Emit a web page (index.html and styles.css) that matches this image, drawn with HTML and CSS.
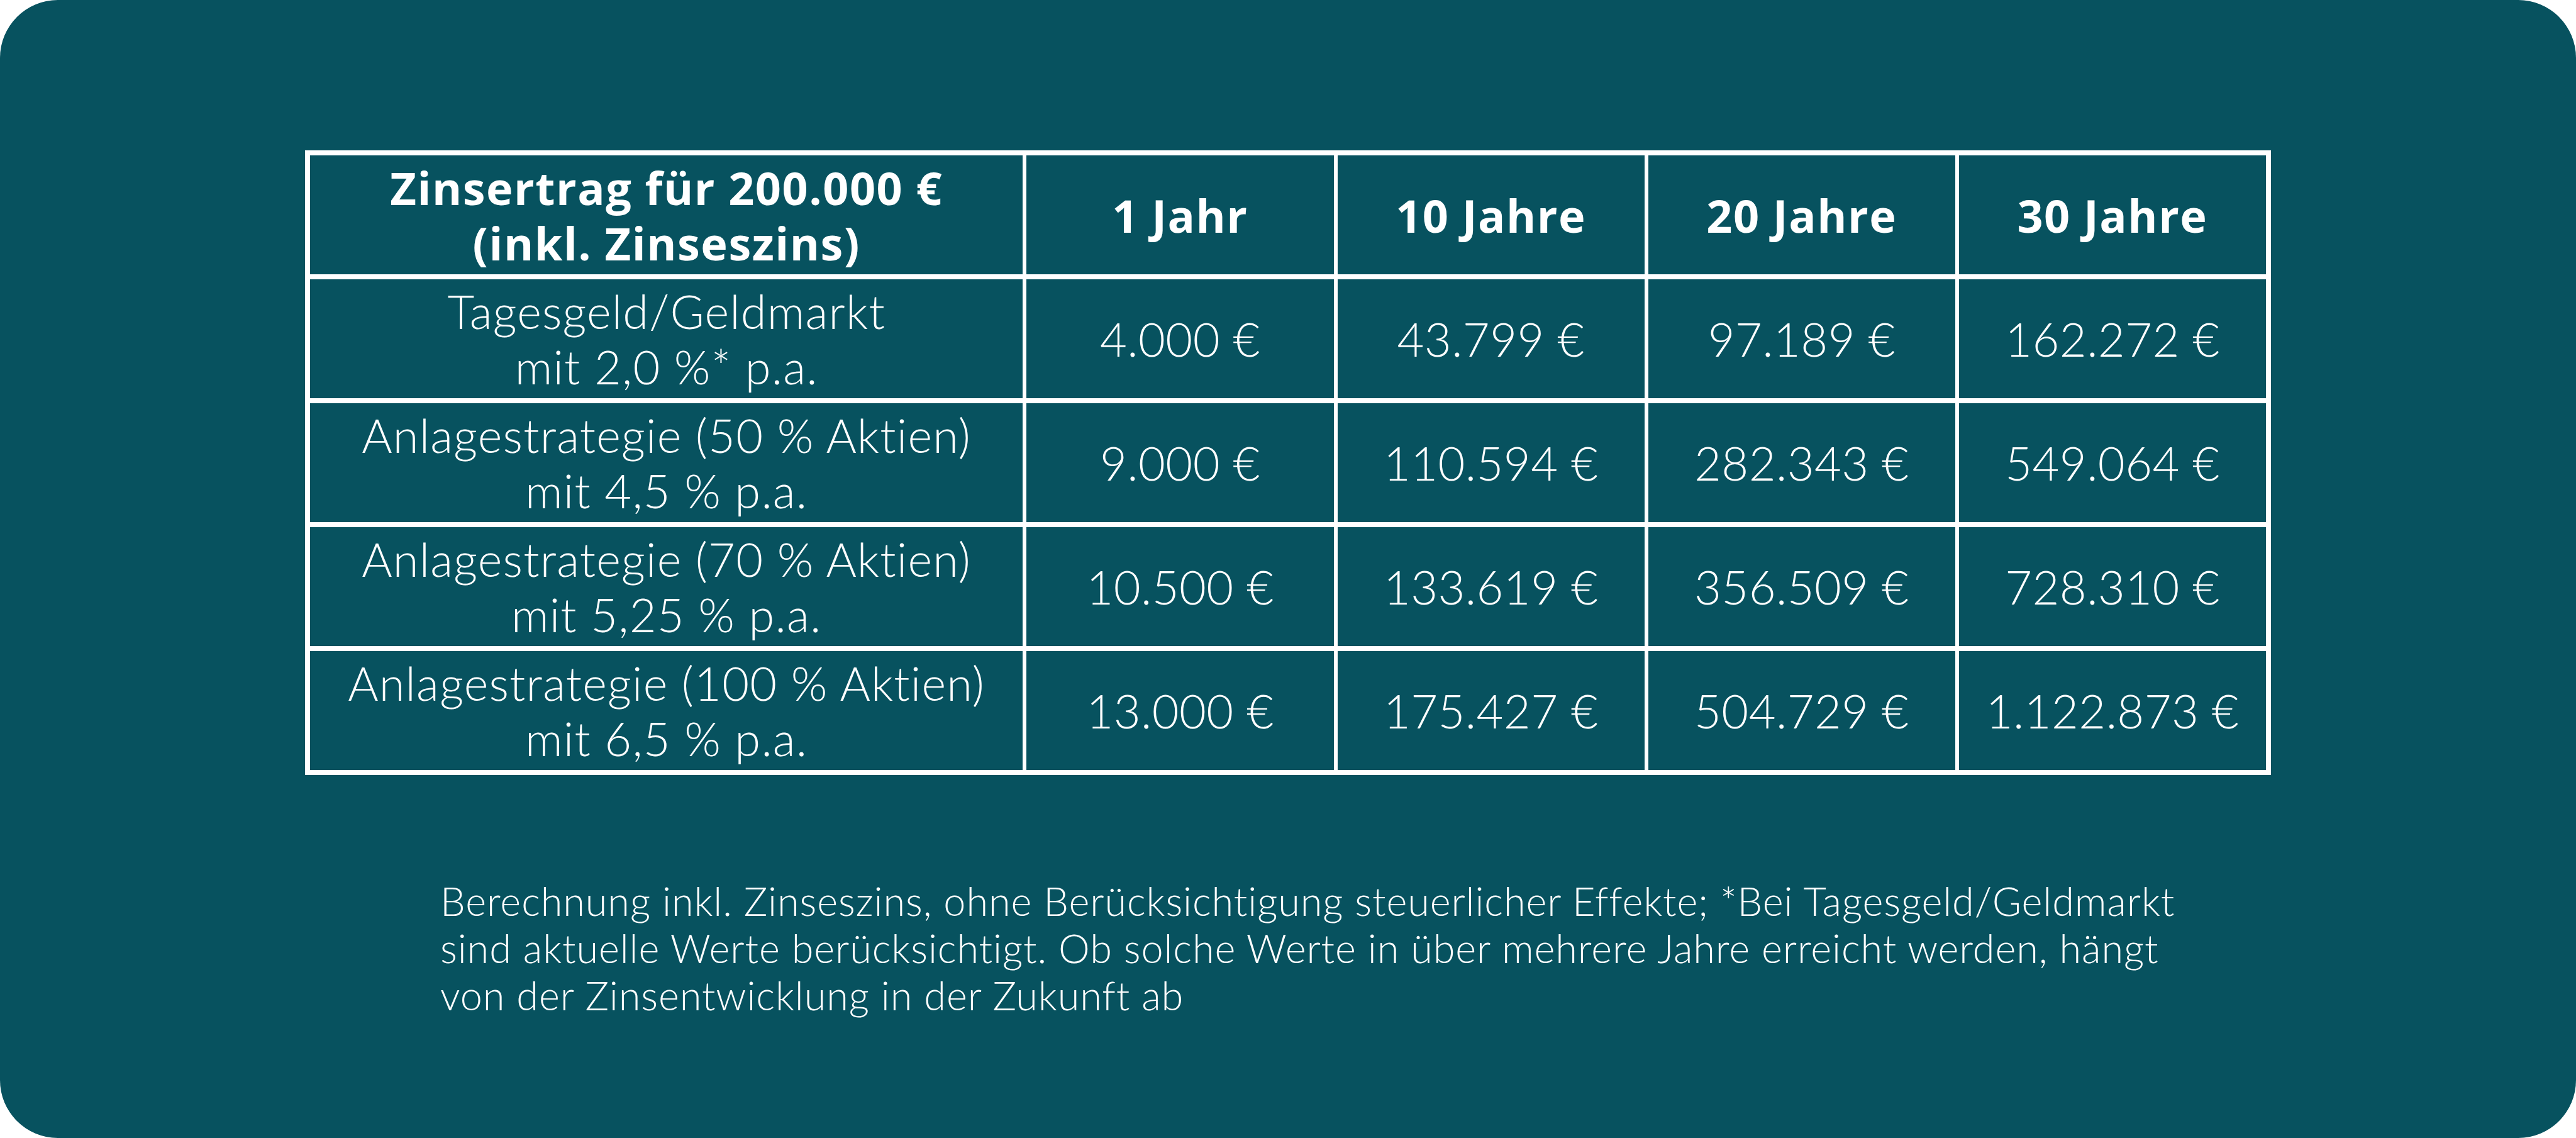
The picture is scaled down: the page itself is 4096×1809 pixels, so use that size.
FILE: index.html
```html
<!DOCTYPE html>
<html lang="de">
<head>
<meta charset="utf-8">
<title>Zinsertrag</title>
<link rel="stylesheet" href="styles.css">
</head>
<body>
<div class="card">
  <table class="rates">
    <colgroup>
      <col class="c-label">
      <col class="c-val"><col class="c-val"><col class="c-val"><col class="c-val">
    </colgroup>
    <thead>
      <tr>
        <th><span class="hl">Zinsertrag für 200.000 €</span><span class="hl">(inkl. Zinseszins)</span></th>
        <th>1 Jahr</th>
        <th>10 Jahre</th>
        <th>20 Jahre</th>
        <th>30 Jahre</th>
      </tr>
    </thead>
    <tbody>
      <tr>
        <td class="label">Tagesgeld/Geldmarkt<br>mit 2,0 %* p.a.</td>
        <td>4.000 €</td><td>43.799 €</td><td>97.189 €</td><td>162.272 €</td>
      </tr>
      <tr>
        <td class="label">Anlagestrategie (50 % Aktien)<br>mit 4,5 % p.a.</td>
        <td>9.000 €</td><td>110.594 €</td><td>282.343 €</td><td>549.064 €</td>
      </tr>
      <tr>
        <td class="label">Anlagestrategie (70 % Aktien)<br>mit 5,25 % p.a.</td>
        <td>10.500 €</td><td>133.619 €</td><td>356.509 €</td><td>728.310 €</td>
      </tr>
      <tr>
        <td class="label">Anlagestrategie (100 % Aktien)<br>mit 6,5 % p.a.</td>
        <td>13.000 €</td><td>175.427 €</td><td>504.729 €</td><td>1.122.873 €</td>
      </tr>
    </tbody>
  </table>
  <p class="note">Berechnung inkl. Zinseszins, ohne Berücksichtigung steuerlicher Effekte; *Bei Tagesgeld/Geldmarkt<br>sind aktuelle Werte berücksichtigt. Ob solche Werte in über mehrere Jahre erreicht werden, hängt<br>von der Zinsentwicklung in der Zukunft ab</p>
</div>
</body>
</html>
```
FILE: styles.css
```css
html, body {
  margin: 0;
  padding: 0;
  background: #ffffff;
}

.card {
  width: 4096px;
  height: 1809px;
  box-sizing: border-box;
  background: #07525f;
  border-radius: 92px;
  padding-top: 239px;
  display: flex;
  flex-direction: column;
  align-items: center;
  font-family: Lato, "Open Sans", "Liberation Sans", sans-serif;
  color: #ffffff;
}

.rates {
  table-layout: fixed;
  width: 3126px;
  border-collapse: separate;
  border-spacing: 6px 8px;
  padding: 0 2px;
  background: #ffffff;
}

.c-label { width: 1133px; }
.c-val { width: 488px; }

.rates th,
.rates td {
  background: #07525f;
  height: 189px;
  padding: 0;
  text-align: center;
  vertical-align: middle;
  line-height: 88px;
}

.rates th {
  font-family: "Open Sans", Lato, "Liberation Sans", sans-serif;
  font-size: 72px;
  font-weight: 700;
  letter-spacing: 1.5px;
}

.hl {
  display: block;
}

.rates td {
  font-size: 74px;
  font-weight: 300;
  letter-spacing: 0.4px;
}

.rates td.label {
  letter-spacing: 1.2px;
}

.note {
  align-self: stretch;
  margin: 162px 0 0 0;
  padding-left: 700px;
  font-size: 63px;
  line-height: 75px;
  font-weight: 300;
  letter-spacing: 0.9px;
}
```
